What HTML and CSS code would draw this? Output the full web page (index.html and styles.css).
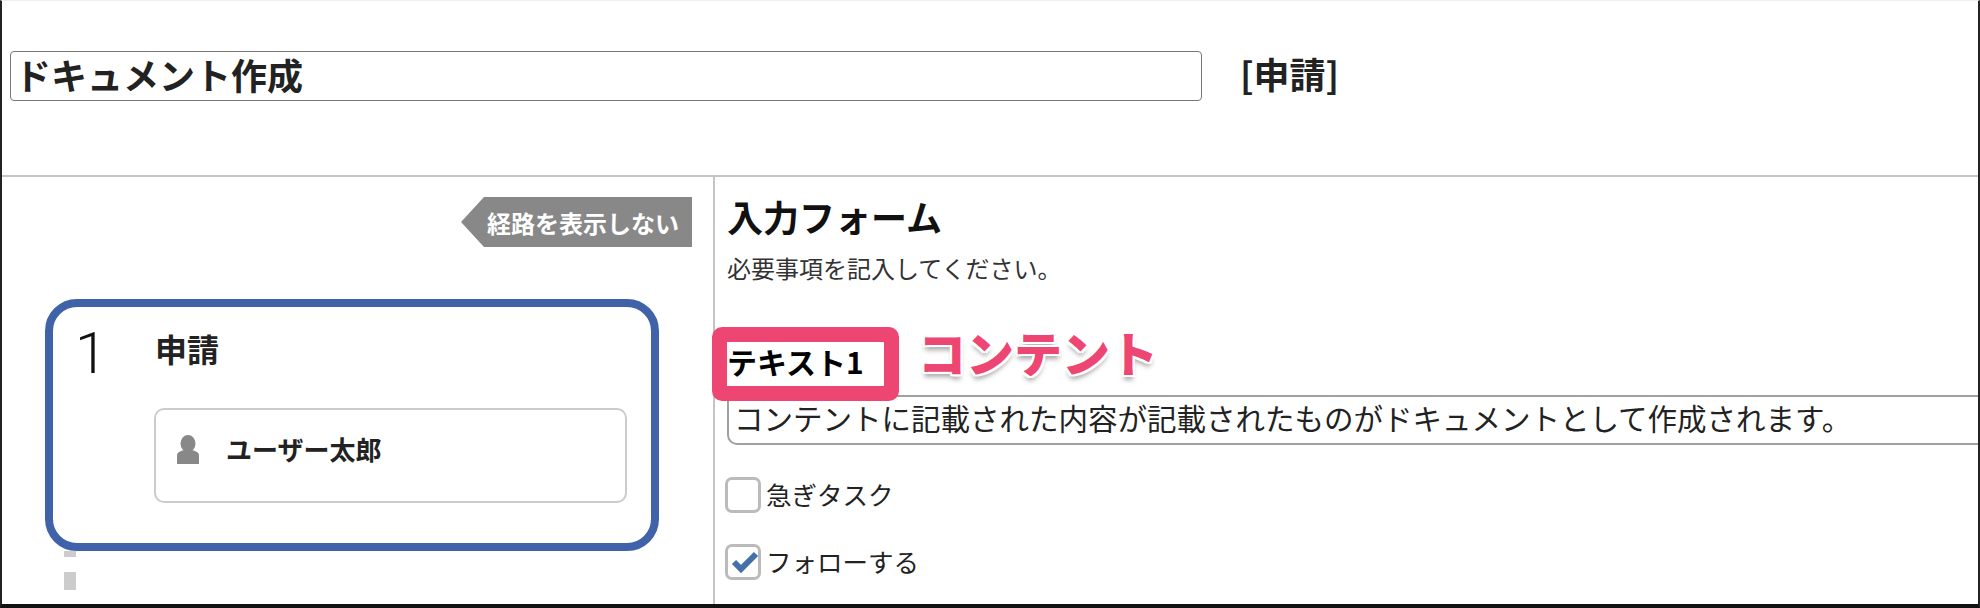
FILE: index.html
```html
<!DOCTYPE html>
<html lang="ja">
<head>
  <meta charset="UTF-8">
  <title>ドキュメント作成</title>
  <link rel="stylesheet" href="styles.css">
</head>
<body>
  <div class="frame">

    <!-- Title bar -->
    <header class="title-bar">
      <div class="title-input">ドキュメント作成</div>
      <div class="title-status">[申請]</div>
    </header>

    <div class="columns">

      <!-- Route -->
      <aside class="route">
        <div class="route-toggle-row">
          <button class="route-toggle">経路を表示しない</button>
        </div>
        <div class="step-card">
          <div class="step-number">1</div>
          <div class="step-body">
            <div class="step-name">申請</div>
            <div class="step-user">
              <svg class="user-icon" viewBox="0 0 22 29" aria-hidden="true">
                <ellipse cx="11" cy="8.5" rx="7.5" ry="8.5"></ellipse>
                <path d="M0 29V20Q0 17 7 15H15Q22 17 22 20V29Z"></path>
              </svg>
              <span class="user-name">ユーザー太郎</span>
            </div>
          </div>
        </div>
        <div class="step-link"></div>
      </aside>

      <!-- Form -->
      <main class="form">
        <h2 class="form-title">入力フォーム</h2>
        <p class="form-lead">必要事項を記入してください。</p>

        <div class="field">
          <label class="field-label">テキスト1</label>
          <div class="label-marker"></div>
          <div class="marker-caption">コンテント</div>
          <div class="field-input">コンテントに記載された内容が記載されたものがドキュメントとして作成されます。</div>
        </div>

        <div class="check-row">
          <span class="check-box"></span>
          <span class="check-label">急ぎタスク</span>
        </div>
        <div class="check-row">
          <span class="check-box">
            <svg class="check-mark" viewBox="0 0 36 36" aria-hidden="true">
              <path d="M9 18L16 25L31 10"></path>
            </svg>
          </span>
          <span class="check-label">フォローする</span>
        </div>
      </main>

    </div>
  </div>
</body>
</html>
```

FILE: styles.css
```css
* {
  box-sizing: border-box;
}

body {
  margin: 0;
  background-color: #fff;
  font-family: "Noto Sans CJK JP", "Noto Sans", sans-serif;
  color: #222;
}

.frame {
  display: flex;
  flex-direction: column;
  height: 608px;
  overflow: hidden;
  border-top: 1px solid #eee;
  border-left: 2px solid #222;
  border-right: 2px solid #222;
  border-bottom: 4px solid #111;
}

.title-bar {
  display: flex;
  align-items: flex-start;
  height: 176px;
  flex-shrink: 0;
  padding: 50px 0 0 8px;
  border-bottom: 2px solid #c4c4c4;
}

.title-input {
  width: 1192px;
  height: 50px;
  padding-left: 4px;
  border: 1.5px solid #777;
  border-radius: 4px;
  font-size: 36px;
  font-weight: 700;
  line-height: 44px;
}

.title-status {
  margin-left: 38px;
  font-size: 36px;
  font-weight: 700;
  line-height: 44px;
}

.columns {
  display: flex;
  flex: 1;
  min-height: 0;
}

/* Route column */
.route {
  width: 713px;
  flex-shrink: 0;
  border-right: 2px solid #c4c4c4;
}

.route-toggle-row {
  display: flex;
  justify-content: flex-end;
  padding: 20px 21px 0 0;
}

.route-toggle {
  width: 231px;
  height: 50px;
  padding: 0 0 0 26px;
  border: none;
  background-color: #888;
  clip-path: polygon(23px 0, 100% 0, 100% 100%, 23px 100%, 0 50%);
  color: #fff;
  font-family: inherit;
  font-size: 24px;
  font-weight: 700;
  text-align: left;
  white-space: nowrap;
}

.step-card {
  display: flex;
  width: 614px;
  height: 252px;
  margin: 52px 0 0 43px;
  padding: 12px 24px 0 22px;
  border: 8px solid #3f62a8;
  border-radius: 32px;
}

.step-number {
  width: 79px;
  flex-shrink: 0;
  font-family: "Roboto", sans-serif;
  font-size: 58px;
  font-weight: 300;
  line-height: 68px;
  color: #111;
}

.step-body {
  flex: 1;
}

.step-name {
  padding: 7px 0 0 1px;
  font-size: 32px;
  font-weight: 700;
  line-height: 44px;
}

.step-user {
  display: flex;
  align-items: flex-start;
  gap: 27px;
  height: 95px;
  margin-top: 38px;
  padding: 25px 0 0 21px;
  border: 2px solid #ccc;
  border-radius: 10px;
}

.user-icon {
  width: 22px;
  height: 29px;
  fill: #888;
  flex-shrink: 0;
}

.user-name {
  font-size: 26px;
  font-weight: 700;
  line-height: 28px;
}

.step-link {
  width: 12px;
  height: 60px;
  margin-left: 62px;
  background-image: repeating-linear-gradient(to bottom, #ccc 0, #ccc 6px, transparent 6px, transparent 21px, #ccc 21px, #ccc 39px, transparent 39px, transparent 54px);
}

/* Form column */
.form {
  flex: 1;
  min-width: 0;
  padding: 13px 0 0 12px;
}

.form-title {
  margin: 0;
  font-size: 36px;
  font-weight: 700;
  line-height: 52px;
  color: #111;
}

.form-lead {
  margin: 9px 0 0;
  font-size: 24px;
  line-height: 34px;
  color: #333;
}

.field {
  position: relative;
  margin-top: 60px;
}

.field-label {
  display: block;
  height: 50px;
  font-size: 30px;
  font-weight: 700;
  line-height: 32px;
  color: #000;
}

/* Annotations drawn on top of the screenshot */
.label-marker {
  position: absolute;
  top: -18px;
  left: -15px;
  width: 187px;
  height: 74px;
  border: 15px solid #ee4672;
  border-radius: 10px;
}

.marker-caption {
  position: absolute;
  top: -28px;
  left: 191px;
  font-size: 48px;
  font-weight: 900;
  line-height: 68px;
  color: #ee4672;
  white-space: nowrap;
  text-shadow: 2px 0 0 #fff, -2px 0 0 #fff, 0 2px 0 #fff, 0 -2px 0 #fff, 2px 2px 0 #fff, -2px 2px 0 #fff, 2px -2px 0 #fff, -2px -2px 0 #fff, 0 5px 5px rgba(0,0,0,0.35);
}

.field-input {
  height: 50px;
  margin-right: -2px;
  padding-left: 5px;
  border: 2px solid #a0a0a0;
  border-right: none;
  border-radius: 0 0 0 10px;
  font-size: 29.5px;
  line-height: 40px;
  white-space: nowrap;
  color: #222;
}

.check-row {
  display: flex;
  align-items: center;
  gap: 5px;
  height: 36px;
  margin-left: -2px;
}

.field + .check-row {
  margin-top: 32px;
}

.check-row + .check-row {
  margin-top: 31px;
}

.check-box {
  width: 36px;
  height: 36px;
  flex-shrink: 0;
  border: 3px solid #bbb;
  border-radius: 7px;
}

.check-mark {
  display: block;
  width: 36px;
  height: 36px;
  margin: -3px;
  fill: none;
  stroke: #4472a8;
  stroke-width: 6;
}

.check-label {
  margin-top: -3px;
  font-size: 25.5px;
  line-height: 36px;
  color: #222;
}
```
